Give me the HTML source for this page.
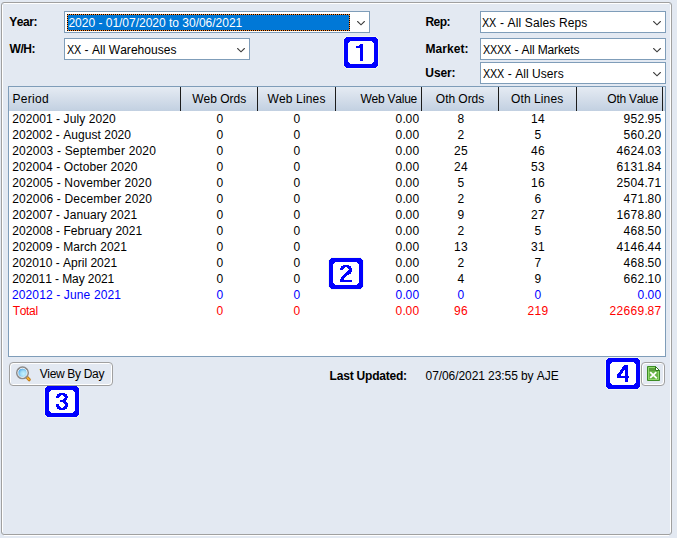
<!DOCTYPE html>
<html><head><meta charset="utf-8"><style>
*{margin:0;padding:0;box-sizing:border-box}
html,body{width:677px;height:538px;overflow:hidden;background:#e3e9f2;font-family:"Liberation Sans",sans-serif;font-size:12px;color:#000;font-kerning:none}
.abs{position:absolute}
#frame{position:absolute;left:1px;top:2px;width:671px;height:533px;border:1px solid #a0a0a0;border-radius:3px}
#fw1{position:absolute;left:4px;top:3px;width:665px;height:1px;background:#fff}
#fw2{position:absolute;left:2px;top:5px;width:1px;height:527px;background:#fff}
#fw3{position:absolute;left:670px;top:5px;width:1px;height:527px;background:#fff}
#fw4{position:absolute;left:4px;top:535px;width:665px;height:1px;background:#fff}
.dh{background:repeating-linear-gradient(90deg,#000 0 1px,#ff8a2e 1px 2px)}
.dv{background:repeating-linear-gradient(180deg,#000 0 1px,#ff8a2e 1px 2px)}
.c{position:absolute;line-height:16px;white-space:nowrap}
.n i{display:inline-block;width:7px;font-style:normal}
.x{display:inline-block;width:7px;transform:scaleX(.9);transform-origin:0 0}
.n i.p{width:3px}
.sel{position:absolute;background:#fff;border:1px solid #7f9db9}
.arr{position:absolute;top:7px}
.dots{outline:1px dotted #000;outline-offset:-1px}
.tbl{position:absolute;left:8px;top:86px;width:658px;height:271px;background:#fff;border:1px solid #7f9db9}
.hdr{position:absolute;left:9px;top:87px;width:656px;height:24px;background:linear-gradient(#e5ebf3,#c2d0e1)}
.sep{position:absolute;top:87px;width:1px;height:24px;background:#1c1c1c}
.seph{position:absolute;top:87px;width:1px;height:24px;background:rgba(255,255,255,.5)}
.bh{position:absolute;background:#fff;clip-path:polygon(3px 0,calc(100% - 3px) 0,100% 3px,100% calc(100% - 3px),calc(100% - 3px) 100%,3px 100%,0 calc(100% - 3px),0 3px)}
.bo{position:absolute;background:#0000ff;clip-path:polygon(2px 0,calc(100% - 2px) 0,100% 2px,100% calc(100% - 2px),calc(100% - 2px) 100%,2px 100%,0 calc(100% - 2px),0 2px)}
.bi{position:absolute;background:#fff;clip-path:polygon(2px 0,calc(100% - 2px) 0,100% 2px,100% calc(100% - 2px),calc(100% - 2px) 100%,2px 100%,0 calc(100% - 2px),0 2px)}
.bd{position:absolute;text-align:center;font-size:24px;font-weight:bold;color:#0000ff}
.btn{position:absolute;border:1px solid #a0a0a0;border-radius:4px;box-shadow:inset 1px 1px 0 #fff,inset -1px -1px 0 #fff}
</style></head><body>
<div id="frame"></div><div id="fw1"></div><div id="fw2"></div><div id="fw3"></div><div id="fw4"></div>
<div class="c" id="lYear" style="left:9.17px;top:14px;letter-spacing:-0.406px;font-weight:bold;">Year:</div>
<div class="c" id="lWH" style="left:9.50px;top:41px;letter-spacing:-0.415px;font-weight:bold;">W/H:</div>
<div class="c" id="lRep" style="left:425.40px;top:14px;letter-spacing:-0.484px;font-weight:bold;">Rep:</div>
<div class="c" id="lMkt" style="left:425.40px;top:41px;letter-spacing:0.083px;font-weight:bold;">Market:</div>
<div class="c" id="lUser" style="left:425.37px;top:65px;letter-spacing:-0.106px;font-weight:bold;">User:</div>
<div class="sel" style="left:64px;top:11px;width:306px;height:22px"></div>
<svg class="abs" style="left:357px;top:21px" width="8" height="5" viewBox="0 0 8 5"><path d="M0.3 0.15 L4 3.8 L7.7 0.15" fill="none" stroke="#3a3a3a" stroke-width="1.1"/></svg>
<div class="abs" style="left:67px;top:14px;width:283px;height:17px;background:#0078d7"></div>
<div class="abs dh" style="left:67px;top:14px;width:283px;height:1px"></div>
<div class="abs dh" style="left:67px;top:30px;width:283px;height:1px"></div>
<div class="abs dv" style="left:67px;top:14px;width:1px;height:17px"></div>
<div class="abs dv" style="left:349px;top:14px;width:1px;height:17px"></div>
<div class="c" id="sYear" style="left:68.45px;top:15px;letter-spacing:-0.011px;color:#fff;">2020 - 01/07/2020 to 30/06/2021</div>
<div class="sel" style="left:64px;top:38px;width:186px;height:22px"></div>
<svg class="abs" style="left:237px;top:48px" width="8" height="5" viewBox="0 0 8 5"><path d="M0.3 0.15 L4 3.8 L7.7 0.15" fill="none" stroke="#3a3a3a" stroke-width="1.1"/></svg>
<div class="c" id="sWH" style="left:67.18px;top:42px;letter-spacing:0.038px;"><span class="x">X</span><span class="x">X</span> - All Warehouses</div>
<div class="sel" style="left:480px;top:11px;width:186px;height:22px"></div>
<svg class="abs" style="left:653px;top:21px" width="8" height="5" viewBox="0 0 8 5"><path d="M0.3 0.15 L4 3.8 L7.7 0.15" fill="none" stroke="#3a3a3a" stroke-width="1.1"/></svg>
<div class="c" id="sRep" style="left:482.48px;top:15px;letter-spacing:0.136px;"><span class="x">X</span><span class="x">X</span> - All Sales Reps</div>
<div class="sel" style="left:480px;top:38px;width:186px;height:22px"></div>
<svg class="abs" style="left:653px;top:48px" width="8" height="5" viewBox="0 0 8 5"><path d="M0.3 0.15 L4 3.8 L7.7 0.15" fill="none" stroke="#3a3a3a" stroke-width="1.1"/></svg>
<div class="c" id="sMkt" style="left:483.31px;top:42px;letter-spacing:-0.133px;"><span class="x">X</span><span class="x">X</span><span class="x">X</span><span class="x">X</span> - All Markets</div>
<div class="sel" style="left:480px;top:62px;width:186px;height:22px"></div>
<svg class="abs" style="left:653px;top:72px" width="8" height="5" viewBox="0 0 8 5"><path d="M0.3 0.15 L4 3.8 L7.7 0.15" fill="none" stroke="#3a3a3a" stroke-width="1.1"/></svg>
<div class="c" id="sUser" style="left:483.31px;top:66px;letter-spacing:0.063px;"><span class="x">X</span><span class="x">X</span><span class="x">X</span> - All Users</div>
<div class="tbl"></div><div class="hdr"></div>
<div class="sep" style="left:180px"></div>
<div class="sep" style="left:257px"></div>
<div class="sep" style="left:335px"></div>
<div class="sep" style="left:421px"></div>
<div class="sep" style="left:498px"></div>
<div class="sep" style="left:576px"></div>
<div class="sep" style="left:662px"></div>
<div class="c" id="hPeriod" style="left:12.49px;top:91px;letter-spacing:0.321px;">Period</div>
<div class="c" id="hWO" style="left:192.23px;top:91px;letter-spacing:-0.015px;">Web Ords</div>
<div class="c" id="hWL" style="left:267.47px;top:91px;letter-spacing:0.153px;">Web Lines</div>
<div class="c" id="hWV" style="left:360.41px;top:91px;letter-spacing:-0.227px;">Web Value</div>
<div class="c" id="hOO" style="left:435.84px;top:91px;letter-spacing:-0.035px;">Oth Ords</div>
<div class="c" id="hOL" style="left:511.09px;top:91px;letter-spacing:0.088px;">Oth Lines</div>
<div class="c" id="hOV" style="left:607.34px;top:91px;letter-spacing:-0.269px;">Oth Value</div>
<div class="c" id="r0" style="left:12.23px;top:111px;letter-spacing:0.075px;">202001 - July 2020</div>
<div class="c n" style="left:216.50px;top:111px;"><i>0</i></div>
<div class="c n" style="left:293.50px;top:111px;"><i>0</i></div>
<div class="c n" style="left:395.50px;top:111px;"><i>0</i><i class="p">.</i><i>0</i><i>0</i></div>
<div class="c n" style="left:457.50px;top:111px;"><i>8</i></div>
<div class="c n" style="left:531.00px;top:111px;"><i>1</i><i>4</i></div>
<div class="c n" style="left:623.50px;top:111px;"><i>9</i><i>5</i><i>2</i><i class="p">.</i><i>9</i><i>5</i></div>
<div class="c" id="r1" style="left:12.23px;top:127px;letter-spacing:0.035px;">202002 - August 2020</div>
<div class="c n" style="left:216.50px;top:127px;"><i>0</i></div>
<div class="c n" style="left:293.50px;top:127px;"><i>0</i></div>
<div class="c n" style="left:395.50px;top:127px;"><i>0</i><i class="p">.</i><i>0</i><i>0</i></div>
<div class="c n" style="left:457.50px;top:127px;"><i>2</i></div>
<div class="c n" style="left:534.50px;top:127px;"><i>5</i></div>
<div class="c n" style="left:623.50px;top:127px;"><i>5</i><i>6</i><i>0</i><i class="p">.</i><i>2</i><i>0</i></div>
<div class="c" id="r2" style="left:12.23px;top:143px;letter-spacing:0.193px;">202003 - September 2020</div>
<div class="c n" style="left:216.50px;top:143px;"><i>0</i></div>
<div class="c n" style="left:293.50px;top:143px;"><i>0</i></div>
<div class="c n" style="left:395.50px;top:143px;"><i>0</i><i class="p">.</i><i>0</i><i>0</i></div>
<div class="c n" style="left:454.00px;top:143px;"><i>2</i><i>5</i></div>
<div class="c n" style="left:531.00px;top:143px;"><i>4</i><i>6</i></div>
<div class="c n" style="left:616.50px;top:143px;"><i>4</i><i>6</i><i>2</i><i>4</i><i class="p">.</i><i>0</i><i>3</i></div>
<div class="c" id="r3" style="left:12.23px;top:159px;letter-spacing:0.088px;">202004 - October 2020</div>
<div class="c n" style="left:216.50px;top:159px;"><i>0</i></div>
<div class="c n" style="left:293.50px;top:159px;"><i>0</i></div>
<div class="c n" style="left:395.50px;top:159px;"><i>0</i><i class="p">.</i><i>0</i><i>0</i></div>
<div class="c n" style="left:454.00px;top:159px;"><i>2</i><i>4</i></div>
<div class="c n" style="left:531.00px;top:159px;"><i>5</i><i>3</i></div>
<div class="c n" style="left:616.50px;top:159px;"><i>6</i><i>1</i><i>3</i><i>1</i><i class="p">.</i><i>8</i><i>4</i></div>
<div class="c" id="r4" style="left:12.23px;top:175px;letter-spacing:0.155px;">202005 - November 2020</div>
<div class="c n" style="left:216.50px;top:175px;"><i>0</i></div>
<div class="c n" style="left:293.50px;top:175px;"><i>0</i></div>
<div class="c n" style="left:395.50px;top:175px;"><i>0</i><i class="p">.</i><i>0</i><i>0</i></div>
<div class="c n" style="left:457.50px;top:175px;"><i>5</i></div>
<div class="c n" style="left:531.00px;top:175px;"><i>1</i><i>6</i></div>
<div class="c n" style="left:616.50px;top:175px;"><i>2</i><i>5</i><i>0</i><i>4</i><i class="p">.</i><i>7</i><i>1</i></div>
<div class="c" id="r5" style="left:12.23px;top:191px;letter-spacing:0.178px;">202006 - December 2020</div>
<div class="c n" style="left:216.50px;top:191px;"><i>0</i></div>
<div class="c n" style="left:293.50px;top:191px;"><i>0</i></div>
<div class="c n" style="left:395.50px;top:191px;"><i>0</i><i class="p">.</i><i>0</i><i>0</i></div>
<div class="c n" style="left:457.50px;top:191px;"><i>2</i></div>
<div class="c n" style="left:534.50px;top:191px;"><i>6</i></div>
<div class="c n" style="left:623.50px;top:191px;"><i>4</i><i>7</i><i>1</i><i class="p">.</i><i>8</i><i>0</i></div>
<div class="c" id="r6" style="left:12.23px;top:207px;letter-spacing:0.075px;">202007 - January 2021</div>
<div class="c n" style="left:216.50px;top:207px;"><i>0</i></div>
<div class="c n" style="left:293.50px;top:207px;"><i>0</i></div>
<div class="c n" style="left:395.50px;top:207px;"><i>0</i><i class="p">.</i><i>0</i><i>0</i></div>
<div class="c n" style="left:457.50px;top:207px;"><i>9</i></div>
<div class="c n" style="left:531.00px;top:207px;"><i>2</i><i>7</i></div>
<div class="c n" style="left:616.50px;top:207px;"><i>1</i><i>6</i><i>7</i><i>8</i><i class="p">.</i><i>8</i><i>0</i></div>
<div class="c" id="r7" style="left:12.23px;top:223px;letter-spacing:0.061px;">202008 - February 2021</div>
<div class="c n" style="left:216.50px;top:223px;"><i>0</i></div>
<div class="c n" style="left:293.50px;top:223px;"><i>0</i></div>
<div class="c n" style="left:395.50px;top:223px;"><i>0</i><i class="p">.</i><i>0</i><i>0</i></div>
<div class="c n" style="left:457.50px;top:223px;"><i>2</i></div>
<div class="c n" style="left:534.50px;top:223px;"><i>5</i></div>
<div class="c n" style="left:623.50px;top:223px;"><i>4</i><i>6</i><i>8</i><i class="p">.</i><i>5</i><i>0</i></div>
<div class="c" id="r8" style="left:12.23px;top:239px;letter-spacing:0.038px;">202009 - March 2021</div>
<div class="c n" style="left:216.50px;top:239px;"><i>0</i></div>
<div class="c n" style="left:293.50px;top:239px;"><i>0</i></div>
<div class="c n" style="left:395.50px;top:239px;"><i>0</i><i class="p">.</i><i>0</i><i>0</i></div>
<div class="c n" style="left:454.00px;top:239px;"><i>1</i><i>3</i></div>
<div class="c n" style="left:531.00px;top:239px;"><i>3</i><i>1</i></div>
<div class="c n" style="left:616.50px;top:239px;"><i>4</i><i>1</i><i>4</i><i>6</i><i class="p">.</i><i>4</i><i>4</i></div>
<div class="c" id="r9" style="left:12.23px;top:255px;letter-spacing:0.011px;">202010 - April 2021</div>
<div class="c n" style="left:216.50px;top:255px;"><i>0</i></div>
<div class="c n" style="left:293.50px;top:255px;"><i>0</i></div>
<div class="c n" style="left:395.50px;top:255px;"><i>0</i><i class="p">.</i><i>0</i><i>0</i></div>
<div class="c n" style="left:457.50px;top:255px;"><i>2</i></div>
<div class="c n" style="left:534.50px;top:255px;"><i>7</i></div>
<div class="c n" style="left:623.50px;top:255px;"><i>4</i><i>6</i><i>8</i><i class="p">.</i><i>5</i><i>0</i></div>
<div class="c" id="r10" style="left:12.23px;top:271px;letter-spacing:-0.083px;">202011 - May 2021</div>
<div class="c n" style="left:216.50px;top:271px;"><i>0</i></div>
<div class="c n" style="left:293.50px;top:271px;"><i>0</i></div>
<div class="c n" style="left:395.50px;top:271px;"><i>0</i><i class="p">.</i><i>0</i><i>0</i></div>
<div class="c n" style="left:457.50px;top:271px;"><i>4</i></div>
<div class="c n" style="left:534.50px;top:271px;"><i>9</i></div>
<div class="c n" style="left:623.50px;top:271px;"><i>6</i><i>6</i><i>2</i><i class="p">.</i><i>1</i><i>0</i></div>
<div class="c" id="r11" style="left:11.92px;top:287px;letter-spacing:0.138px;color:#0000ff;">202012 - June 2021</div>
<div class="c n" style="left:216.50px;top:287px;color:#0000ff;"><i>0</i></div>
<div class="c n" style="left:293.50px;top:287px;color:#0000ff;"><i>0</i></div>
<div class="c n" style="left:395.50px;top:287px;color:#0000ff;"><i>0</i><i class="p">.</i><i>0</i><i>0</i></div>
<div class="c n" style="left:457.50px;top:287px;color:#0000ff;"><i>0</i></div>
<div class="c n" style="left:534.50px;top:287px;color:#0000ff;"><i>0</i></div>
<div class="c n" style="left:637.50px;top:287px;color:#0000ff;"><i>0</i><i class="p">.</i><i>0</i><i>0</i></div>
<div class="c" id="r12" style="left:12.67px;top:303px;letter-spacing:-0.304px;color:#ff0000;">Total</div>
<div class="c n" style="left:216.50px;top:303px;color:#ff0000;"><i>0</i></div>
<div class="c n" style="left:293.50px;top:303px;color:#ff0000;"><i>0</i></div>
<div class="c n" style="left:395.50px;top:303px;color:#ff0000;"><i>0</i><i class="p">.</i><i>0</i><i>0</i></div>
<div class="c n" style="left:454.00px;top:303px;color:#ff0000;"><i>9</i><i>6</i></div>
<div class="c n" style="left:527.50px;top:303px;color:#ff0000;"><i>2</i><i>1</i><i>9</i></div>
<div class="c n" style="left:609.50px;top:303px;color:#ff0000;"><i>2</i><i>2</i><i>6</i><i>6</i><i>9</i><i class="p">.</i><i>8</i><i>7</i></div>
<svg class="abs" style="left:343px;top:36px" width="36" height="33" viewBox="-1 -1 36 33" shape-rendering="crispEdges"><path d="M2 -1H32V0H33V1H34V2H35V29H34V30H33V31H32V32H2V31H1V30H0V29H-1V2H0V1H1V0H2Z" fill="#f3f7f3"/><path d="M2 0H32V1H33V2H34V29H33V30H32V31H2V30H1V29H0V2H1V1H2Z" fill="#0000ff"/><path d="M6 4H28V5H29V6H30V25H29V26H28V27H6V26H5V25H4V6H5V5H6Z" fill="#fff"/><path d="M16 7h3v1h-3zM15 8h4v1h-4zM12 9h7v1h-7zM12 10h7v1h-7zM16 11h3v1h-3zM16 12h3v1h-3zM16 13h3v1h-3zM16 14h3v1h-3zM16 15h3v1h-3zM16 16h3v1h-3zM16 17h3v1h-3zM16 18h3v1h-3zM16 19h3v1h-3zM16 20h3v1h-3zM16 21h3v1h-3zM16 22h3v1h-3zM16 23h3v1h-3z" fill="#0000ff"/></svg>
<svg class="abs" style="left:328px;top:257px" width="36" height="33" viewBox="-1 -1 36 33" shape-rendering="crispEdges"><path d="M2 -1H32V0H33V1H34V2H35V29H34V30H33V31H32V32H2V31H1V30H0V29H-1V2H0V1H1V0H2Z" fill="#f3f7f3"/><path d="M2 0H32V1H33V2H34V29H33V30H32V31H2V30H1V29H0V2H1V1H2Z" fill="#0000ff"/><path d="M6 4H28V5H29V6H30V25H29V26H28V27H6V26H5V25H4V6H5V5H6Z" fill="#fff"/><path d="M14 7h6v1h-6zM12 8h10v1h-10zM12 9h4v1h-4zM18 9h4v1h-4zM11 10h4v1h-4zM19 10h4v1h-4zM11 11h3v1h-3zM20 11h3v1h-3zM19 12h4v1h-4zM18 13h5v1h-5zM17 14h5v1h-5zM16 15h6v1h-6zM15 16h5v1h-5zM14 17h4v1h-4zM13 18h4v1h-4zM12 19h4v1h-4zM12 20h3v1h-3zM11 21h4v1h-4zM11 22h12v1h-12zM11 23h12v1h-12z" fill="#0000ff"/></svg>
<svg class="abs" style="left:44px;top:385px" width="36" height="33" viewBox="-1 -1 36 33" shape-rendering="crispEdges"><path d="M2 -1H32V0H33V1H34V2H35V29H34V30H33V31H32V32H2V31H1V30H0V29H-1V2H0V1H1V0H2Z" fill="#f3f7f3"/><path d="M2 0H32V1H33V2H34V29H33V30H32V31H2V30H1V29H0V2H1V1H2Z" fill="#0000ff"/><path d="M6 4H28V5H29V6H30V25H29V26H28V27H6V26H5V25H4V6H5V5H6Z" fill="#fff"/><path d="M14 7h6v1h-6zM12 8h10v1h-10zM12 9h4v1h-4zM18 9h4v1h-4zM11 10h4v1h-4zM19 10h4v1h-4zM11 11h3v1h-3zM20 11h3v1h-3zM19 12h3v1h-3zM18 13h4v1h-4zM15 14h6v1h-6zM15 15h6v1h-6zM18 16h4v1h-4zM19 17h4v1h-4zM11 18h3v1h-3zM20 18h3v1h-3zM11 19h3v1h-3zM20 19h3v1h-3zM11 20h4v1h-4zM19 20h4v1h-4zM12 21h4v1h-4zM18 21h4v1h-4zM12 22h10v1h-10zM14 23h6v1h-6z" fill="#0000ff"/></svg>
<svg class="abs" style="left:605px;top:357px" width="36" height="33" viewBox="-1 -1 36 33" shape-rendering="crispEdges"><path d="M2 -1H32V0H33V1H34V2H35V29H34V30H33V31H32V32H2V31H1V30H0V29H-1V2H0V1H1V0H2Z" fill="#f3f7f3"/><path d="M2 0H32V1H33V2H34V29H33V30H32V31H2V30H1V29H0V2H1V1H2Z" fill="#0000ff"/><path d="M6 4H28V5H29V6H30V25H29V26H28V27H6V26H5V25H4V6H5V5H6Z" fill="#fff"/><path d="M18 7h4v1h-4zM17 8h5v1h-5zM16 9h6v1h-6zM16 10h6v1h-6zM15 11h7v1h-7zM14 12h4v1h-4zM19 12h3v1h-3zM14 13h3v1h-3zM19 13h3v1h-3zM13 14h4v1h-4zM19 14h3v1h-3zM12 15h4v1h-4zM19 15h3v1h-3zM11 16h4v1h-4zM19 16h3v1h-3zM11 17h4v1h-4zM19 17h3v1h-3zM11 18h12v1h-12zM11 19h12v1h-12zM19 20h3v1h-3zM19 21h3v1h-3zM19 22h3v1h-3zM19 23h3v1h-3z" fill="#0000ff"/></svg>
<div class="btn" style="left:9px;top:362px;width:104px;height:24px"></div>
<svg class="abs" style="left:14px;top:364px" width="18" height="19" viewBox="14 364 18 19">
<defs><radialGradient id="lens" cx="0.62" cy="0.62" r="0.7"><stop offset="0" stop-color="#c4f2fd"/><stop offset="0.5" stop-color="#a3dcf6"/><stop offset="1" stop-color="#4aa6e8"/></radialGradient></defs>
<path d="M26.8 377.2 L29.2 379.7" stroke="#c07a18" stroke-width="3.2" stroke-linecap="round"/>
<path d="M27 377.4 L29 379.5" stroke="#f7b733" stroke-width="1.4" stroke-linecap="round"/>
<circle cx="22.5" cy="372.8" r="5.6" fill="none" stroke="#8c8c8c" stroke-width="1.9"/>
<circle cx="22.5" cy="372.8" r="4.55" fill="none" stroke="#fff" stroke-width="0.9"/>
<circle cx="22.5" cy="372.8" r="4.1" fill="url(#lens)"/>
</svg>
<div class="c" id="bView" style="left:39.63px;top:366px;letter-spacing:-0.327px;">View By Day</div>
<div class="c" id="lLast" style="left:329.62px;top:368px;letter-spacing:-0.210px;font-weight:bold;">Last Updated:</div>
<div class="c" id="vLast" style="left:425.54px;top:368px;letter-spacing:-0.075px;">07/06/2021 23:55 by AJE</div>
<div class="btn" style="left:641px;top:362px;width:24px;height:24px"></div>
<svg class="abs" style="left:646px;top:365px" width="15" height="17" viewBox="646 365 15 17">
<path d="M647.5 366.5 H655.5 L659.5 370.5 V380.5 H647.5 Z" fill="#68b446" stroke="#3d8d26" stroke-width="1"/>
<path d="M648.5 367.5 H655 L658.5 371 V379.5 H648.5 Z" fill="none" stroke="#93d96f" stroke-width="1"/>
<rect x="649" y="368" width="6" height="3" fill="#5a9f3b"/>
<path d="M655.5 366.5 L659.5 370.5 H655.5 Z" fill="#fff" stroke="#2f7a1c" stroke-width="1"/>
<path d="M650.2 372.2 L656.8 378.3 M656.3 372.2 L650.2 377.8" stroke="#fff" stroke-width="1.8"/>
</svg>
</body></html>
